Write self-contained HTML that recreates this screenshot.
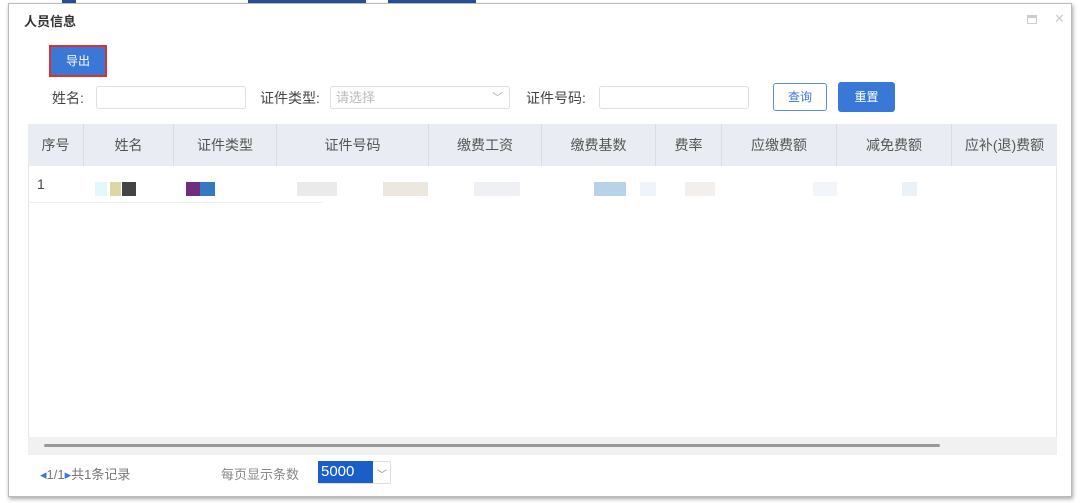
<!DOCTYPE html>
<html><head><meta charset="utf-8"><style>
*{box-sizing:border-box;margin:0;padding:0}
body{width:1080px;height:503px;background:#fff;font-family:"Liberation Sans","Noto Sans CJK SC",sans-serif;position:relative;overflow:hidden;color:#555;font-size:14px}
.a{position:absolute}
.dlg{left:8px;top:3px;width:1064px;height:494px;border:1px solid #bbb;box-shadow:1px 2px 4px rgba(0,0,0,.35);background:#fff}
.in{border:1px solid #dcdfe6;border-radius:3px;background:#fff;height:23px}
.hd{top:124px;left:28px;width:1029px;height:42px;background:#e9ecf2}
.hd div{position:absolute;top:0;height:42px;line-height:42px;text-align:center;border-right:1px solid #d8dce4;color:#555;font-size:14px}
.sq{position:absolute;top:182px;height:14px}
</style></head><body>
<div class="a" style="left:62px;top:0;width:14px;height:3px;background:#2a4f9a"></div>
<div class="a" style="left:248px;top:0;width:118px;height:3px;background:#2a4f9a"></div>
<div class="a" style="left:388px;top:0;width:88px;height:3px;background:#2a4f9a"></div>
<div class="a dlg"></div>
<div class="a" style="left:24px;top:11px;font-size:13px;font-weight:bold;color:#333">人员信息</div>
<div class="a" style="left:1027px;top:15px;width:10px;height:9px;border:1px solid #ccc;border-top-width:3px"></div>
<div class="a" style="left:1054px;top:11px;color:#ccc;font-size:13px">✕</div>
<div class="a" style="left:49px;top:45px;width:58px;height:32px;border:2px solid #e0302a;background:#3a78d8;color:#fff;font-size:12px;text-align:center;line-height:28px">导出</div>
<div class="a" style="left:52px;top:88px;font-size:14px;color:#444">姓名:</div>
<div class="a in" style="left:96px;top:86px;width:150px"></div>
<div class="a" style="left:260px;top:88px;font-size:14px;color:#444">证件类型:</div>
<div class="a in" style="left:330px;top:86px;width:180px;color:#bbb;font-size:13px;padding-left:5px;line-height:21px">请选择<span style="position:absolute;right:6px;top:1px;color:#aaa;font-size:11px">﹀</span></div>
<div class="a" style="left:526px;top:88px;font-size:14px;color:#444">证件号码:</div>
<div class="a in" style="left:599px;top:86px;width:150px"></div>
<div class="a" style="left:773px;top:83px;width:54px;height:28px;border:1px solid #5b8fdc;border-radius:3px;color:#3a78d8;font-size:12px;text-align:center;line-height:26px">查询</div>
<div class="a" style="left:838px;top:82px;width:57px;height:30px;background:#3a78d8;border-radius:3px;color:#fff;font-size:12px;text-align:center;line-height:30px">重置</div>
<div class="a hd">
<div style="left:0;width:56px">序号</div>
<div style="left:56px;width:90px">姓名</div>
<div style="left:146px;width:103px">证件类型</div>
<div style="left:249px;width:152px">证件号码</div>
<div style="left:401px;width:113px">缴费工资</div>
<div style="left:514px;width:114px">缴费基数</div>
<div style="left:628px;width:66px">费率</div>
<div style="left:694px;width:115px">应缴费额</div>
<div style="left:809px;width:115px">减免费额</div>
<div style="left:924px;width:105px;border:none">应补(退)费额</div>
</div>
<div class="a" style="left:28px;top:166px;width:1px;height:272px;background:#e6e6e6"></div>
<div class="a" style="left:1056px;top:166px;width:1px;height:272px;background:#e6e6e6"></div>
<div class="a" style="left:37px;top:176px;font-size:14px;color:#444">1</div>
<div class="a" style="left:28px;top:202px;width:295px;height:1px;background:#eee"></div>
<div class="sq" style="left:95px;width:12px;background:#e4f8fb"></div>
<div class="sq" style="left:110px;width:11px;background:#ddd6a6"></div>
<div class="sq" style="left:122px;width:14px;background:#444"></div>
<div class="sq" style="left:186px;width:14px;background:#6f2e7e"></div>
<div class="sq" style="left:200px;width:15px;background:#3579c2"></div>
<div class="sq" style="left:297px;width:40px;background:#eaeaea"></div>
<div class="sq" style="left:383px;width:45px;background:#ece8e0"></div>
<div class="sq" style="left:474px;width:46px;background:#eef0f4"></div>
<div class="sq" style="left:594px;width:32px;background:#b8d3e8"></div>
<div class="sq" style="left:640px;width:16px;background:#eef4fa"></div>
<div class="sq" style="left:685px;width:30px;background:#f3efec"></div>
<div class="sq" style="left:813px;width:24px;background:#f2f6fa"></div>
<div class="sq" style="left:902px;width:15px;background:#eaf2f8"></div>
<div class="a" style="left:28px;top:437px;width:1029px;height:18px;background:#f1f1f1"></div>
<div class="a" style="left:44px;top:444px;width:896px;height:3px;background:#999;border-radius:2px"></div>
<div class="a" style="left:40px;top:464px;font-size:13px;color:#777"><span style="color:#3a78d8">◂</span>1/1<span style="color:#3a78d8">▸</span>共1条记录</div>
<div class="a" style="left:221px;top:464px;font-size:13px;color:#888">每页显示条数</div>
<div class="a" style="left:318px;top:461px;width:73px;height:23px;border:1px solid #ddd;border-radius:2px"></div>
<div class="a" style="left:318px;top:461px;width:55px;height:22px;background:#1a5fc8;color:#fff;font-size:15px;line-height:22px;padding-left:3px">5000</div>
<div class="a" style="left:377px;top:466px;font-size:10px;color:#888">﹀</div>
</body></html>
